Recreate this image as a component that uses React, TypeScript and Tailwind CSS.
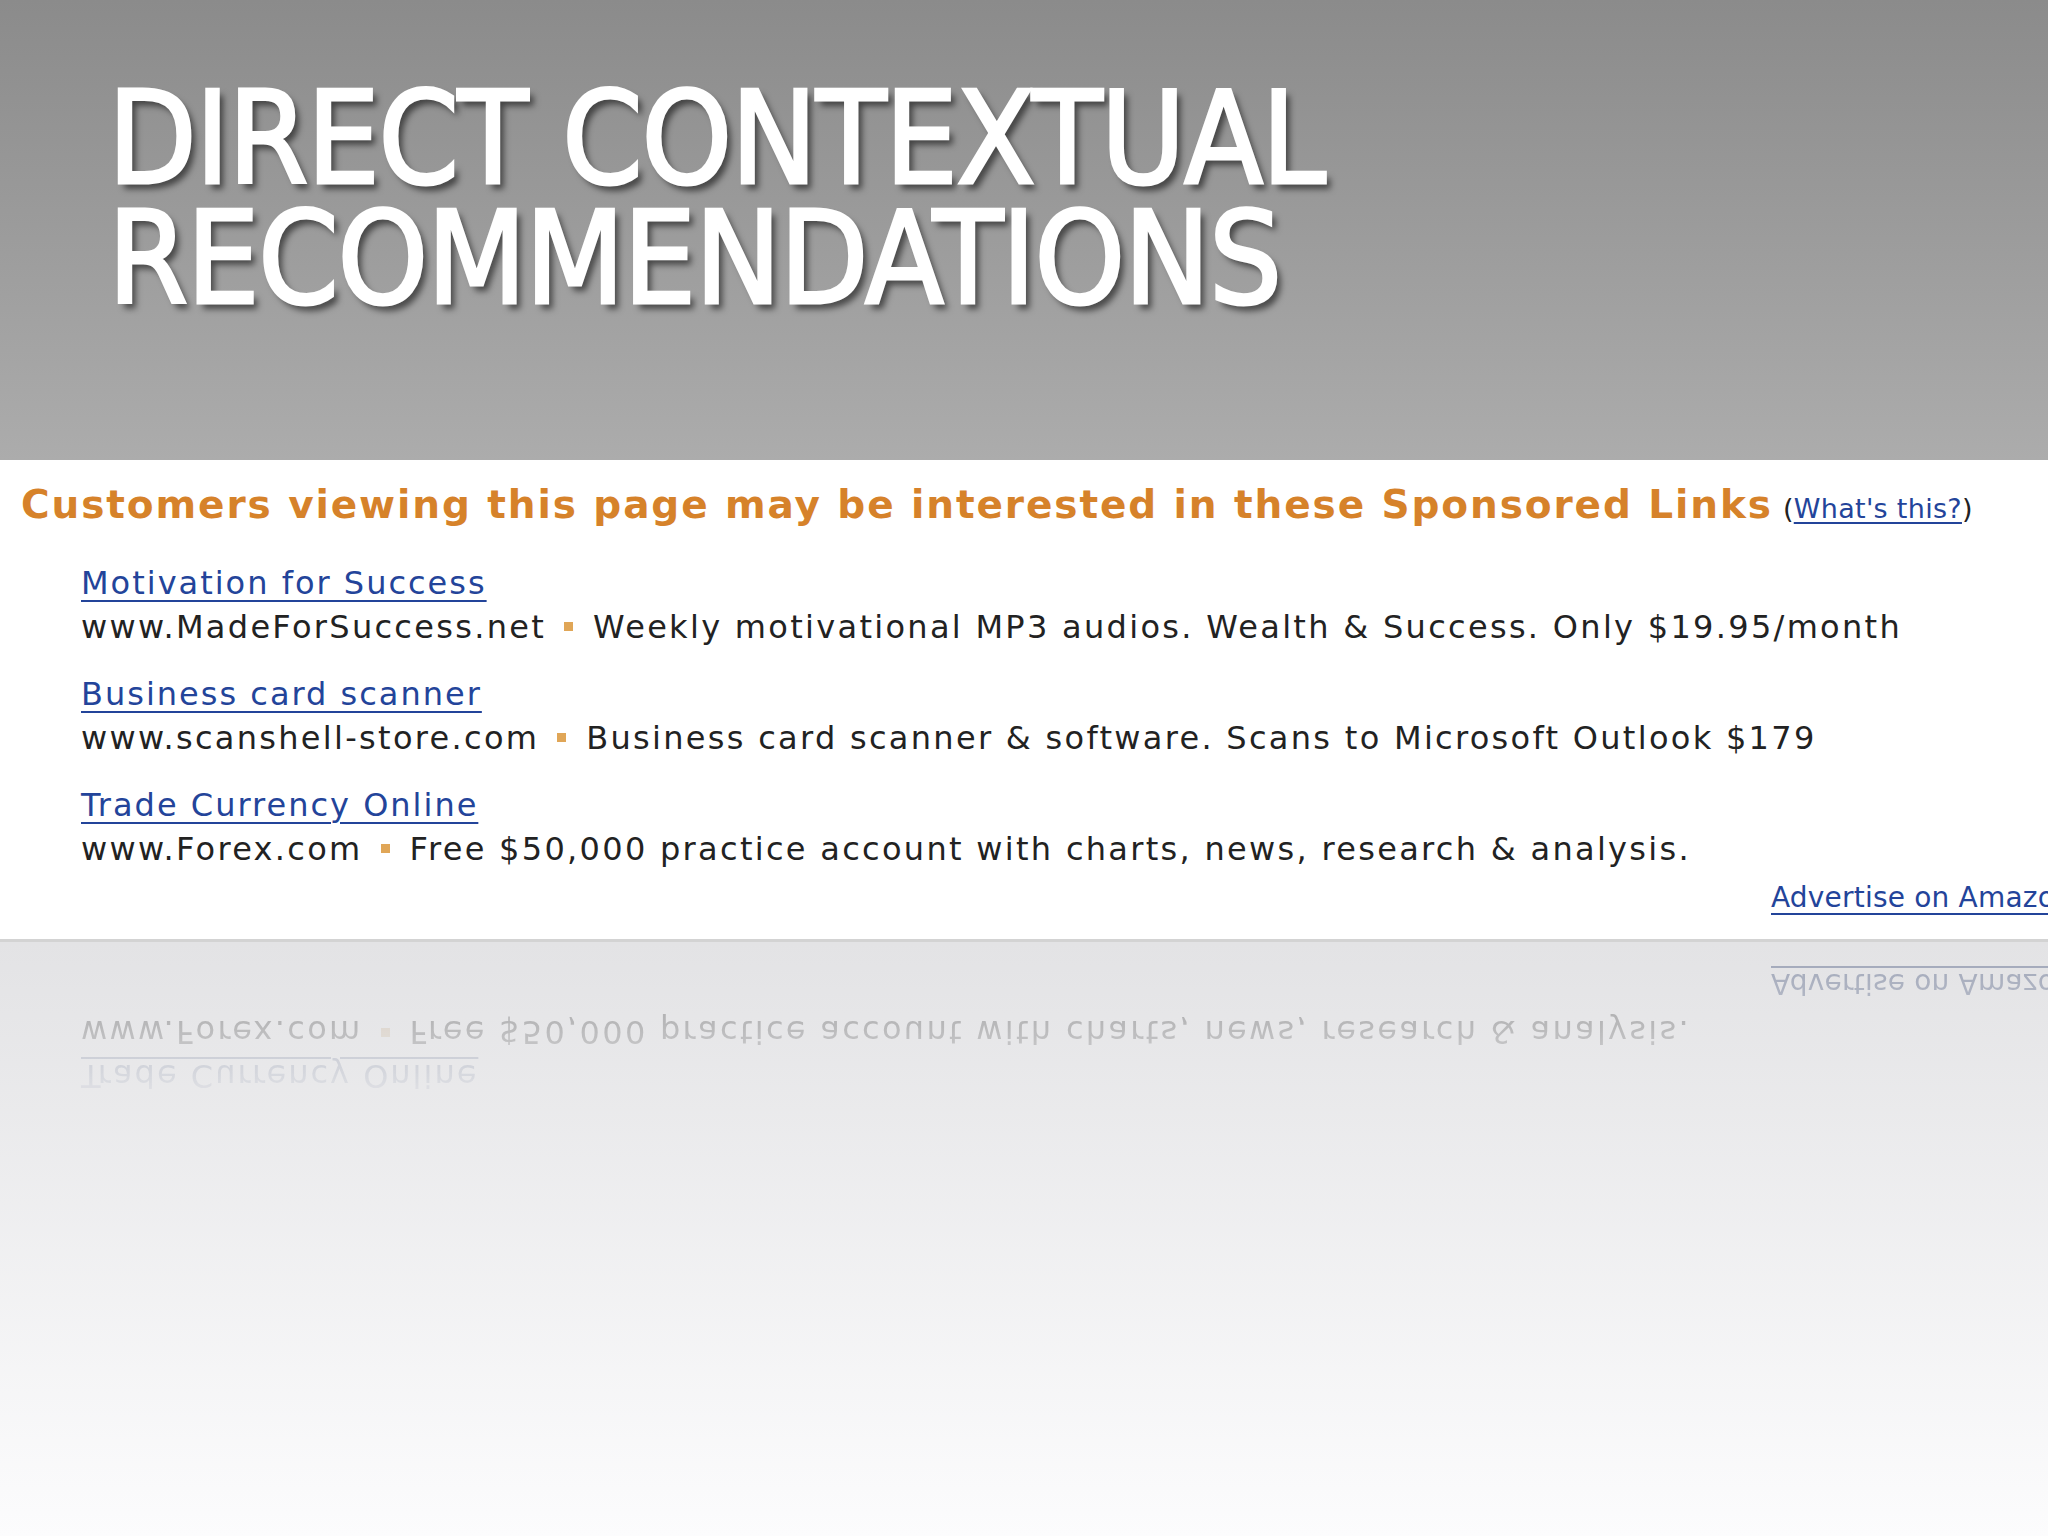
import React from "react";

const ads = [
  {
    title: "Motivation for Success",
    site: "www.MadeForSuccess.net",
    text: "Weekly motivational MP3 audios. Wealth & Success. Only $19.95/month",
  },
  {
    title: "Business card scanner",
    site: "www.scanshell-store.com",
    text: "Business card scanner & software. Scans to Microsoft Outlook $179",
  },
  {
    title: "Trade Currency Online",
    site: "www.Forex.com",
    text: "Free $50,000 practice account with charts, news, research & analysis.",
  },
];

function Bullet() {
  return <span className="inline-block w-[9px] h-[9px] bg-[#e0a657] ml-[18px] mr-[20px] align-[7px]" />;
}

function AdBlock() {
  return (
    <div className="h-full bg-white pt-[22px] font-['DejaVu_Sans',sans-serif] whitespace-nowrap overflow-hidden">
      <div className="pl-[21px] flex items-baseline">
        <span className="text-[39px] leading-[46px] font-bold text-[#d6822a] tracking-[1.9px]">
          Customers viewing this page may be interested in these Sponsored Links
        </span>
        <span className="ml-[10px] text-[27px] text-[#222] tracking-[0.3px]">
          (<span className="text-[#23449a] underline underline-offset-4">What's this?</span>)
        </span>
      </div>
      <div className="mt-[33px] pl-[81px] flex flex-col gap-[27px]">
        {ads.map((ad) => (
          <div key={ad.title} className="flex flex-col gap-[4px]">
            <span className="text-[32px] leading-[40px] text-[#23449a] underline underline-offset-[6px] decoration-2 tracking-[2px]">
              {ad.title}
            </span>
            <span className="text-[32px] leading-[40px] text-[#222] tracking-[2.3px]">
              {ad.site}
              <Bullet />
              {ad.text}
            </span>
          </div>
        ))}
      </div>
      <div className="mt-[9px] pl-[1771px] text-[28px] leading-[40px] text-[#23449a] underline underline-offset-[6px] decoration-2 tracking-[0.2px]">
        Advertise on Amazon
      </div>
    </div>
  );
}

export default function App() {
  return (
    <div className="w-[2048px] h-[1536px] overflow-hidden flex flex-col">
      <header className="h-[460px] shrink-0 bg-gradient-to-b from-[#8b8b8b] to-[#acacac] pl-[108px] pt-[79px]">
        <h1 className="font-['DejaVu_Sans_Condensed',sans-serif] font-normal text-white text-[128px] leading-[120px] tracking-[-1.2px] [-webkit-text-stroke:3px_white] [text-shadow:5px_6px_6px_rgba(0,0,0,0.55)]">
          DIRECT CONTEXTUAL
          <br />
          RECOMMENDATIONS
        </h1>
      </header>
      <section className="h-[479px] shrink-0">
        <AdBlock />
      </section>
      <div className="h-[3px] shrink-0 bg-[#d3d3d3]" />
      <div className="flex-1 bg-gradient-to-b from-[#e3e3e5] to-[#fcfcfd] overflow-hidden">
        <div className="h-[479px] opacity-40 saturate-50 [mask-image:linear-gradient(to_bottom,black_0px,rgba(0,0,0,0.6)_80px,transparent_170px)]">
          <div className="h-full -scale-y-100 [&>div]:bg-transparent">
            <AdBlock />
          </div>
        </div>
      </div>
    </div>
  );
}
